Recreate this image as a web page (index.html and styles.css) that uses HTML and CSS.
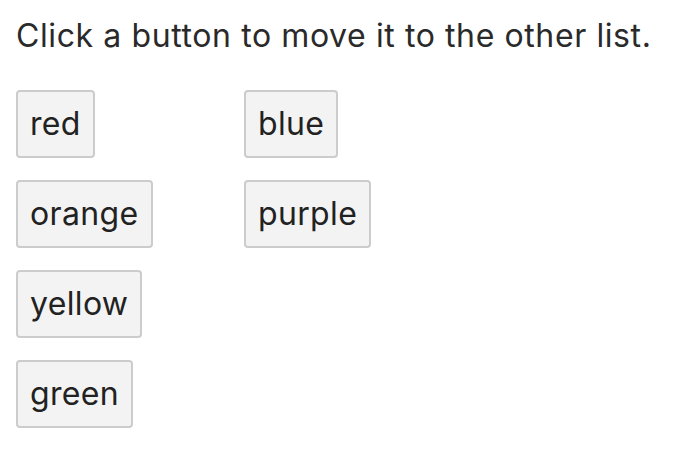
FILE: index.html
```html
<!DOCTYPE html>
<html>
<head>
<meta charset="utf-8">
<link rel="stylesheet" href="styles.css">
</head>
<body>
<p class="intro">Click a button to move it to the other list.</p>
<div class="lists">
  <div class="list">
    <button class="item">red</button>
    <button class="item">orange</button>
    <button class="item">yellow</button>
    <button class="item">green</button>
  </div>
  <div class="list">
    <button class="item">blue</button>
    <button class="item">purple</button>
  </div>
</div>
</body>
</html>
```

FILE: styles.css
```css
html, body {
  margin: 0;
  background: #ffffff;
}
body {
  padding: 16px;
  font-family: Inter, "Liberation Sans", Arial, sans-serif;
  color: #222222;
}
.intro {
  margin: 0;
  font-size: 32px;
  line-height: 40px;
  letter-spacing: 0.6px;
  color: #2a2a2a;
}
.lists {
  display: grid;
  grid-template-columns: 228px auto;
  margin-top: 34px;
}
.list {
  display: flex;
  flex-direction: column;
  align-items: flex-start;
  gap: 22px;
}
.item {
  box-sizing: border-box;
  height: 68px;
  padding: 0 12px;
  margin: 0;
  border: 2px solid #cccccc;
  border-radius: 4px;
  background: #f3f3f3;
  font-family: Inter, "Liberation Sans", Arial, sans-serif;
  font-size: 32px;
  letter-spacing: 0.35px;
  color: #222222;
  line-height: 1;
}
```
